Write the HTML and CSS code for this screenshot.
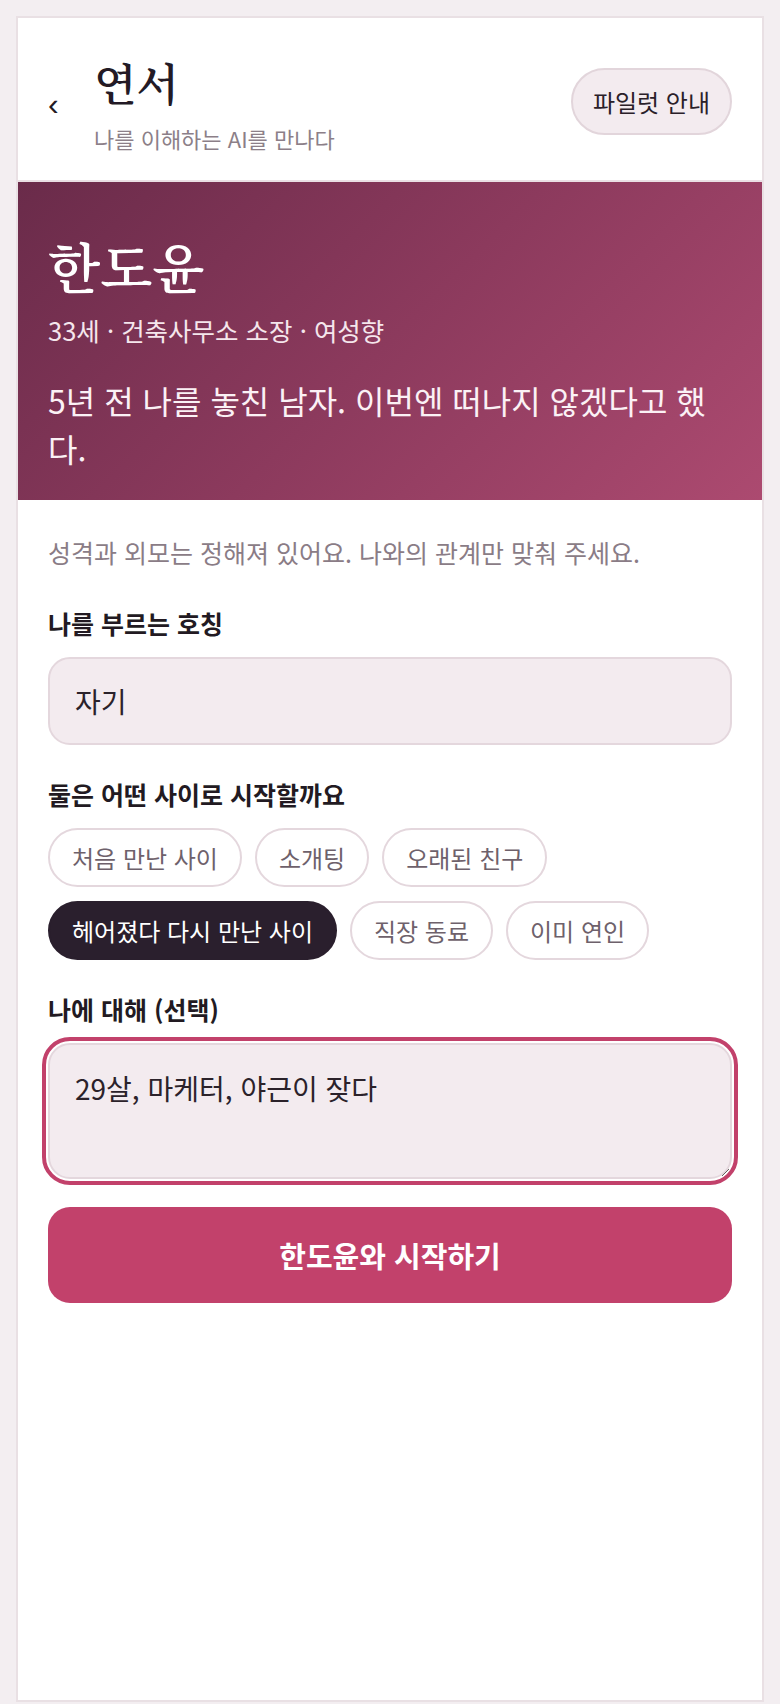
FILE: index.html
```html
<!DOCTYPE html>
<html lang="ko">
<head>
<meta charset="utf-8">
<title>연서</title>
<link rel="stylesheet" href="styles.css">
</head>
<body>
<div class="card">
  <header class="topbar">
    <button class="back" type="button">‹</button>
    <div class="brand">
      <h1 class="brand-title">연서</h1>
      <p class="brand-sub">나를 이해하는 AI를 만나다</p>
    </div>
    <button class="pilot" type="button">파일럿 안내</button>
  </header>

  <section class="hero">
    <h2 class="hero-name">한도윤</h2>
    <p class="hero-meta">33세 · 건축사무소 소장 · 여성향</p>
    <p class="hero-tag">5년 전 나를 놓친 남자. 이번엔 떠나지 않겠다고 했다.</p>
  </section>

  <section class="form">
    <p class="desc">성격과 외모는 정해져 있어요. 나와의 관계만 맞춰 주세요.</p>

    <div class="field field-first">
      <label class="label">나를 부르는 호칭</label>
      <div class="input">자기</div>
    </div>

    <div class="field">
      <label class="label">둘은 어떤 사이로 시작할까요</label>
      <div class="chips">
        <span class="chip">처음 만난 사이</span>
        <span class="chip">소개팅</span>
        <span class="chip">오래된 친구</span>
        <span class="chip chip-on">헤어졌다 다시 만난 사이</span>
        <span class="chip">직장 동료</span>
        <span class="chip">이미 연인</span>
      </div>
    </div>

    <div class="field">
      <label class="label">나에 대해 (선택)</label>
      <textarea class="textarea">29살, 마케터, 야근이 잦다</textarea>
    </div>

    <button class="cta" type="button">한도윤와 시작하기</button>
  </section>
</div>
</body>
</html>
```

FILE: styles.css
```css
* { box-sizing: border-box; }
html, body { margin: 0; padding: 0; }
body {
  background: #f3eef1;
  padding: 16px 16px 0;
  font-family: "Noto Sans CJK KR", "Noto Sans", sans-serif;
  color: #231a25;
}
.card {
  background: #fff;
  border: 2px solid #e9e0e4;
  min-height: calc(100vh - 18px);
}
.topbar {
  display: flex;
  align-items: center;
  padding: 38px 30px 27px;
  border-bottom: 2px solid #eadfe4;
}
.back {
  border: 0;
  background: none;
  padding: 0;
  font-family: "Liberation Sans", sans-serif;
  font-size: 32px;
  line-height: 1;
  color: #231a25;
  width: 46px;
  text-align: left;
  margin-top: -2px;
}
.brand { flex: 1; }
.brand-title {
  margin: 0;
  font-family: "Noto Serif CJK KR", "Noto Sans CJK KR", serif;
  font-size: 44px;
  font-weight: 600;
  line-height: 53px;
}
.brand-sub {
  margin: 14px 0 0;
  font-size: 22px;
  line-height: 30px;
  color: #8c7f88;
}
.pilot {
  font-family: inherit;
  font-size: 24px;
  line-height: 33px;
  padding: 15px 20px;
  border-radius: 999px;
  border: 2px solid #e2d5db;
  background: #f3ebef;
  color: #2a2029;
  margin-bottom: 7px;
}
.hero {
  background: linear-gradient(135deg, #6a2b4a 0%, #8c3a5d 50%, #ac4a70 100%);
  color: #fff;
  padding: 51px 30px 28px;
}
.hero-name {
  margin: 0;
  font-family: "Noto Serif CJK KR", "Noto Sans CJK KR", serif;
  font-size: 54px;
  font-weight: 600;
  line-height: 65px;
}
.hero-meta {
  margin: 15px 0 0;
  font-size: 25.5px;
  line-height: 34px;
  color: #f5e6ec;
}
.hero-tag {
  margin: 29px 0 0;
  font-size: 32px;
  line-height: 48px;
  color: #fbf1f5;
}
.form {
  padding: 34px 30px 40px;
}
.desc {
  margin: 0;
  font-size: 25px;
  line-height: 36px;
  color: #8a7c86;
}
.field {
  margin-top: 32px;
  display: flex;
  flex-direction: column;
}
.field-first { margin-top: 36px; }
.label {
  font-size: 25px;
  font-weight: 700;
  line-height: 34px;
  color: #221a22;
  margin-bottom: 17px;
}
.input {
  height: 88px;
  display: flex;
  align-items: center;
  padding: 0 25px;
  font-size: 28px;
  color: #2b222a;
  background: #f3ebef;
  border: 2px solid #e4d7dd;
  border-radius: 22px;
}
.chips {
  display: flex;
  flex-wrap: wrap;
  gap: 14px 13px;
}
.chip {
  font-size: 24px;
  line-height: 33px;
  padding: 11px 22px;
  border: 2px solid #e4d7dd;
  border-radius: 999px;
  color: #6e616b;
  background: #fff;
}
.chip-on {
  background: #2a1f2d;
  border-color: #2a1f2d;
  color: #fff;
}
.textarea {
  font-family: inherit;
  height: 136px;
  font-size: 28px;
  line-height: 42px;
  padding: 22px 25px;
  color: #2b222a;
  background: #f3ebef;
  border: 2px solid #e4d7dd;
  border-radius: 22px;
  outline: 4px solid #c2416b;
  outline-offset: 2px;
  resize: vertical;
}
.cta {
  display: block;
  width: 100%;
  margin-top: 28px;
  height: 96px;
  border: 0;
  border-radius: 22px;
  background: #c2416b;
  color: #fff;
  font-family: inherit;
  font-size: 29px;
  font-weight: 700;
}
```
